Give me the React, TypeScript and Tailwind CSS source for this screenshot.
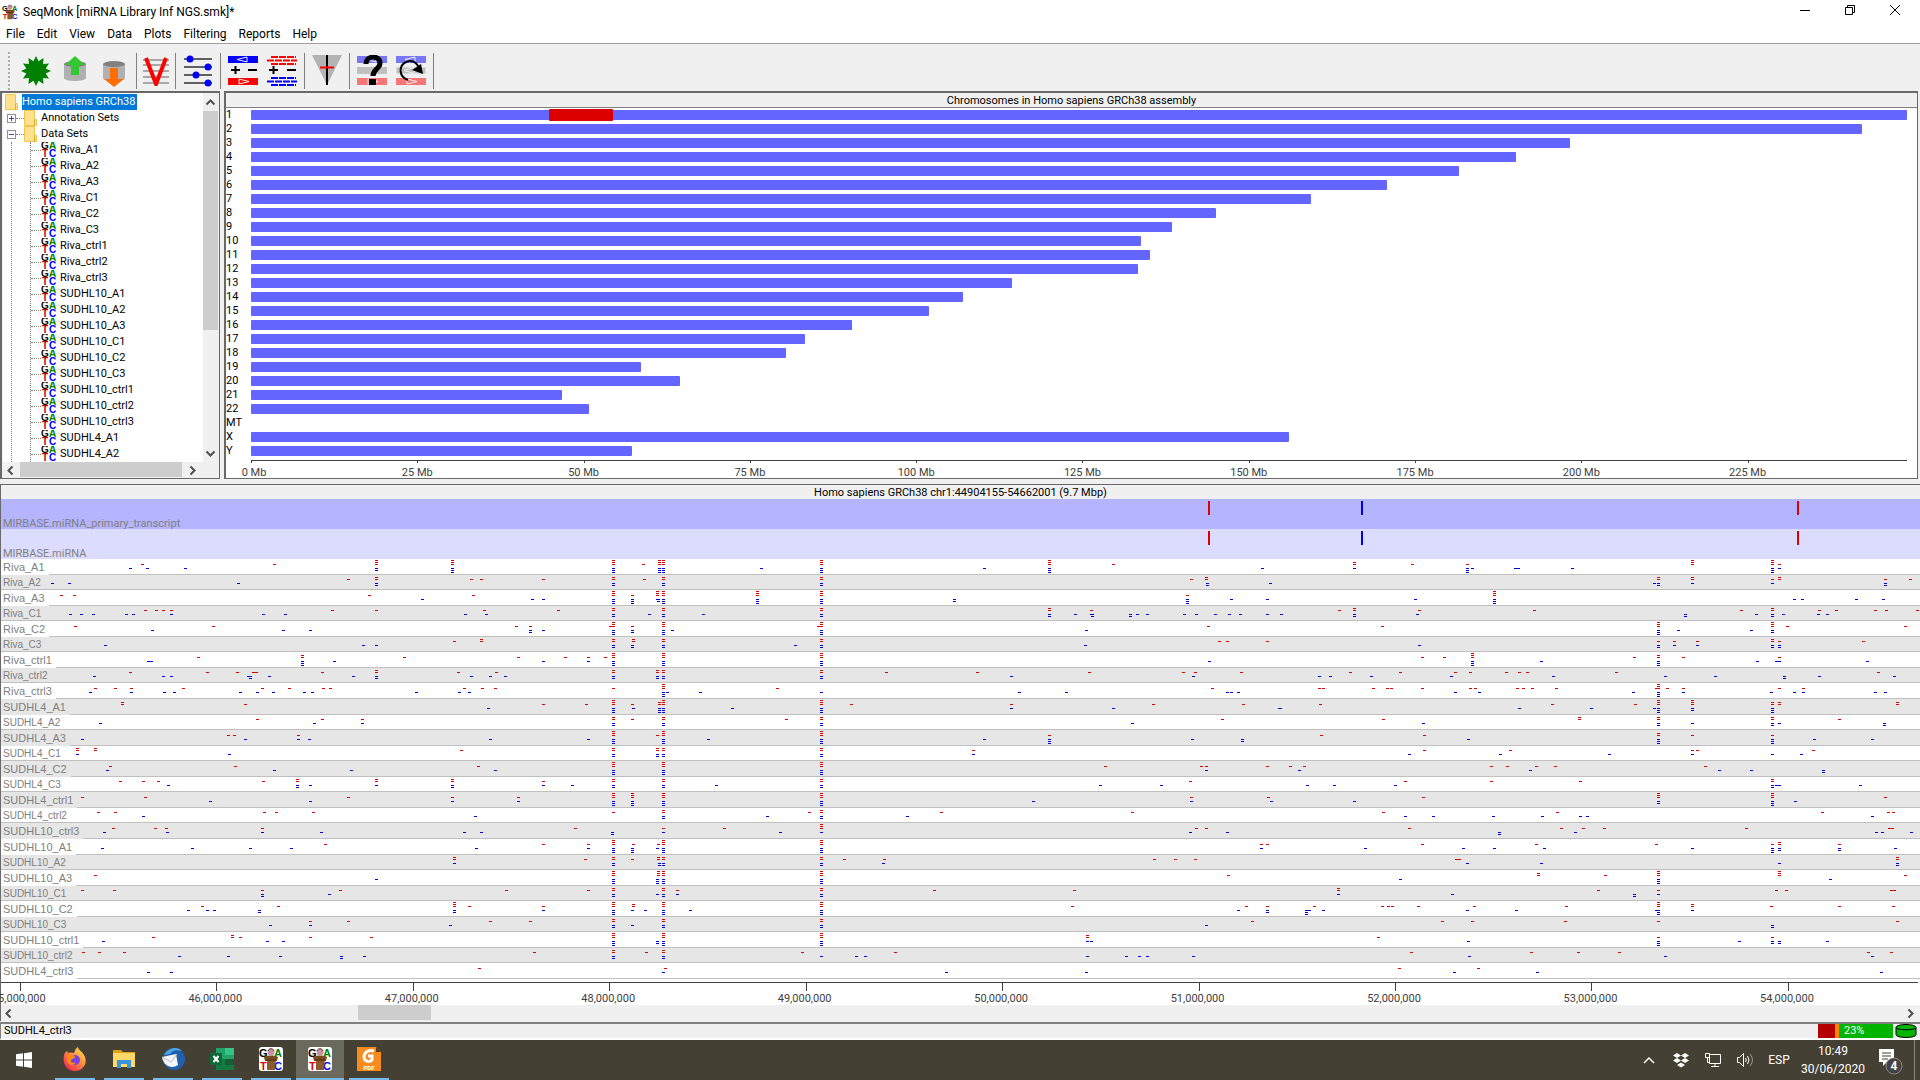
import { ReactNode } from "react";

interface Lane {
  name: string;
  fwd: string[];
  rev: string[];
  tall: boolean;
}

const START = 44904155;
const SPAN = 9757846;
const BLOCK = 1568;
const BINS = BLOCK * 3;

const chromosomes: [string, number][] = [
  ["1", 248.96], ["2", 242.19], ["3", 198.3], ["4", 190.21], ["5", 181.54],
  ["6", 170.81], ["7", 159.35], ["8", 145.14], ["9", 138.39], ["10", 133.8],
  ["11", 135.09], ["12", 133.28], ["13", 114.36], ["14", 107.04], ["15", 101.99],
  ["16", 90.34], ["17", 83.26], ["18", 80.37], ["19", 58.62], ["20", 64.44],
  ["21", 46.71], ["22", 50.82], ["MT", 0], ["X", 156.04], ["Y", 57.23],
];
const LONGEST = 248.96;

const treeItems = [
  "Riva_A1", "Riva_A2", "Riva_A3", "Riva_C1", "Riva_C2", "Riva_C3",
  "Riva_ctrl1", "Riva_ctrl2", "Riva_ctrl3",
  "SUDHL10_A1", "SUDHL10_A2", "SUDHL10_A3", "SUDHL10_C1", "SUDHL10_C2", "SUDHL10_C3",
  "SUDHL10_ctrl1", "SUDHL10_ctrl2", "SUDHL10_ctrl3", "SUDHL4_A1", "SUDHL4_A2",
];

// reads per lane in three blocks of bins, "922x3" is a stack of three reads
const lanes: Lane[] = [
  { name: "Riva_A1", tall: true,
    fwd: ["349 672 922x3 1108x3 1503x3", "8 47x3 57x3 444x3 1003x3 1160", "182x2 324 459 1010x3 1206x3 1223"],
    rev: ["319 361 454 922x2 1108x3 1503x3", "47x3 57x3 297 444x3 844 1003x3 1525", "182 459x3 471 576 584 716 1206x3 1223"] },
  { name: "Riva_A2", tall: false,
    fwd: ["853 922x2 1155 1179 1331 1503x2", "11 57x2 444x2 1351 1388x2", "927x2 1010x2 1206 1223x2 1483 1544"],
    rev: ["128 170 584 922x2 1503x2", "57x2 444x2 1390x2 1544", "917 927x2 1010 1206 1483x2"] },
  { name: "Riva_A3", tall: true,
    fwd: ["150 182 905 1160 1503x3 1549", "43x3 57x3 288x3 444x3 1341", "525x3"],
    rev: ["1035 1304 1331 1503x3 1549x3", "43 45x2 57x3 288x3 444x3 770x2 1341x3 1449 1537", "332 525x3 1260 1280 1412 1478"] },
  { name: "Riva_C1", tall: false,
    fwd: ["356 383 400 420 814 922 1187 1368 1503x2", "57x2 444x2 1003x2 1106", "145 182x2 341 623 1130 1206x2 1321 1363 1459 1486 1562"],
    rev: ["172 199 229 310 327 420 645 699 1140 1192 1503x2", "23 57x2 155 444x2 1003x2 1067 1106 1109x2 1201x2 1219 1243 1334 1363 1410 1444 1471 1537", "3 182x2 337 993x2 1167 1206x2 1233 1319 1341"] },
  { name: "Riva_C2", tall: true,
    fwd: ["185 523 1265 1299 1496 1503x3 1549", "57x3 438 444x3 1392", "251 927x3 1206x3 1243 1532"],
    rev: ["373 694 760 1299x2 1331 1503x3 1549x2", "57x3 79 444x3 1094", "927x3 976 1155 1206x2"] },
  { name: "Riva_C3", tall: false,
    fwd: ["1113 1179x2 1503x2 1551x2", "57x2 444x2 1419 1439 1537", "927 966 1023 1206x2 1223 1429"],
    rev: ["258 890 922 1503x2 1549x2", "57x2 381 444x2 1091", "341 927x2 966 1023 1206x2 1223x2"] },
  { name: "Riva_ctrl1", tall: true,
    fwd: ["487 741x2 991 1270 1385 1441 1483 1503x3", "57x3 444x3", "349 403 471x3 868 927x2 988 1223"],
    rev: ["364 371 741x3 819 1331 1441 1503x3", "57x3 444x3 1395", "471x3 640 927x3 1170 1217 1223 1439"] },
  { name: "Riva_ctrl2", tall: false,
    fwd: ["319 508 582 621 628 790 922x2 1123 1216 1503x2", "43x2 57x2 444x2 604 827 1101 1331 1361 1473", "172 295 430 466 555 586 606 824 1466"],
    rev: ["231 400 420 608 613x2 660 866 922x2 1155 1201 1238 1503x2", "43x2 57x2 444x2 910 1356", "96 123 224 420 670 944 1067 1236x2 1321 1505"] },
  { name: "Riva_ctrl3", tall: true,
    fwd: ["234 283 322 449 643 709 792 809 1138 1182 1214 1503", "57x3 337 1402", "96 106 229 263 273 349 466 479 582 596 618 677 922 927x3 949 988 1223 1282"],
    rev: ["221 322 403 427 589 631 670 746 765 1020 1125 1150", "57x3 67 148 444 929 1045 1439 1449 1466", "430 488 866 927x3 988 1204 1260 1282 1459 1483"] },
  { name: "SUDHL4_A1", tall: true,
    fwd: ["300x2 601 1331 1437 1503x3 1549", "47x2 57x3 444x3 518 910 1258 1478", "99 667 871 927x3 1010x3 1206x2 1223x2 1513x2"],
    rev: ["1196 1503x3 1551", "47x3 57x3 226 444x3 910 1160 1567", "1 586 763 917 927x3 1010x2 1206x3"] },
  { name: "SUDHL4_A2", tall: false,
    fwd: ["631 790 888 1503x2 1549", "57x2 359 444x2 1427", "253 733x2 927x2 1206x2 1370"],
    rev: ["246 770 888 1503x2", "57x2 444x2 1206", "351 927x2 1010 1206x2 1223 1481x2"] },
  { name: "SUDHL4_A3", tall: true,
    fwd: ["559 574 731 1503x3", "43 57x3 444x3 1003", "101 354 927x2 1010 1206"],
    rev: ["202 601 731 758 1201 1441 1503x3", "57x3 167 444x3 844 1003x3 1353 1476x2", "461 927x3 1206x3 1309 1451"] },
  { name: "SUDHL4_C1", tall: false,
    fwd: ["190x2 234x2 1130 1503x2", "43x2 57x2 444x2 817", "354 564 1010 1023 1307"],
    rev: ["190 562 1503x2", "43x2 57x2 444x2 817", "317 540 807 1010 1206 1277"] },
  { name: "SUDHL4_C2", tall: true,
    fwd: ["270 577 1172 1503x3", "57x3 444x3 1140 1375 1388 1537", "25 60 518 557 628 675 1042"],
    rev: ["263 672 861 1214 1503x3", "57x3 444x3 1388", "47 613 1076 1155 1331x2"] },
  { name: "SUDHL4_C3", tall: false,
    fwd: ["295 351 388 645 729x2 922x2 1108x2 1331 1503x2", "57x2 444x2 1348", "307 518 736 1206x2"],
    rev: ["412 729x2 760 922 1108x2 1331 1402 1503x2", "57x2 187 444x2 1128 1277", "67 133 283 1206x2 1217 1223 1422"] },
  { name: "SUDHL4_ctrl1", tall: true,
    fwd: ["202 356 853 1108 1270 1503x3 1549x3", "57x3 444x3 1351 1539", "351 927x3 1206x3 1483"],
    rev: ["515 760 1108 1270 1503x3 1549x3", "57x3 444x3 964 1351 1547", "182 927x2 1206x3 1263"] },
  { name: "SUDHL4_ctrl2", tall: false,
    fwd: ["241 283 648 677 768 1503", "57x2 415 444x2 738 1206", "253 680 1329 1490 1503"],
    rev: ["351 1165", "57x2 312 444x2 655", "307 376 523 643 736 753 1451"] },
  { name: "SUDHL10_ctrl3", tall: true,
    fwd: ["278 381 408 643 1410", "57 207 444x3 1363 1388", "317 689 743 795 1143 1494 1500"],
    rev: ["256 410 643 787 1138 1179 1500x2", "57 344 444 1348 1439", "537x2 724 1461 1476 1547"] },
  { name: "SUDHL10_A1", tall: true,
    fwd: ["797 1331 1441 1503x3 1551", "45 57x3 444x3 1522 1537", "349 628 922 1206 1223x2 1370"],
    rev: ["251 471 613 714 1167 1441 1503x3 1549x3", "43 57x3 444x3 1522", "209 449 525 648 1010 1206x3 1223x2 1370x2 1508"] },
  { name: "SUDHL10_A2", tall: false,
    fwd: ["1113x2 1434 1503x2 1549", "45x2 57x2 444x2 501 599 1260 1312 1361", "432 439 1513x2"],
    rev: ["1113 1503x2", "47x2 57x2 444x2 596", "459 640 1223 1513x2"] },
  { name: "SUDHL10_A3", tall: true,
    fwd: ["234 1503x3", "45x3 57x3 444x3 1441", "633x2 797 927x3 1223x3 1532"],
    rev: ["922 1503x3", "43x3 57x3 444x3", "295 927x3 1348"] },
  { name: "SUDHL10_C1", tall: false,
    fwd: ["202 280 643 834 1241 1441 1503x2", "57x2 92 444x2 721 1064", "143x2 780 927 1216 1241 1498 1505"],
    rev: ["643x2 807 1503x2", "43 57x2 92 444x2", "143 422 868x2 927"] },
  { name: "SUDHL10_C2", tall: true,
    fwd: ["496 682 1113x3 1150 1331 1503x3 1551x2", "57x3 444x3 1059 1486 1537", "84 251 265 275 339 476 702 927x3 1010x2 1204 1370 1503"],
    rev: ["461 508 525 635x2 1113x2 1331 1503x3 1549", "13 57x3 123 444x3 1466 1537x2", "65x3 72 106 459 579 922 927x3 1010"] },
  { name: "SUDHL10_C3", tall: false,
    fwd: ["760 853 1201 1299 1503x2", "57x2 444x2 1500", "398 471 699 927 1513"],
    rev: ["662 760 1103 1503x2 1549", "57x2 444x2 1388", "1206x2"] },
  { name: "SUDHL10_ctrl1", tall: true,
    fwd: ["376 569x2 589 760 910 1503x3", "57x3 444x3 1096x2", "241 927 1206"],
    rev: ["253 655 694 1503x3", "43x2 57x3 444x3 1096 1106", "461 927x3 1125 1206x2 1223x2 1341"] },
  { name: "SUDHL10_ctrl2", tall: false,
    fwd: ["204 243 305 1309 1503x2", "16 57x2 398 626", "322 616 731 831 1441 1498"],
    rev: ["439 559 687 836x2 893 1503x2", "57x2 444 530 552 1096 1192 1223 1243 1356", "464 944 1451"] },
  { name: "SUDHL4_ctrl3", tall: true,
    fwd: ["1174", "62", "292 486"],
    rev: ["363 420", "57 751 1094", "427 631 1473"] },
];

const parseReads = (blocks: string[]) =>
  blocks.flatMap((block, i) =>
    block.split(" ").map((token) => {
      const [bin, count] = token.split("x");
      const px = Math.floor(((Number(bin) + i * BLOCK) / BINS) * 1920) - 2;
      return { left: `${(px / 1919) * 100}%`, count: Number(count ?? 1) };
    })
  );

const Reads = ({ lane }: { lane: Lane }) => {
  const mid = lane.tall ? 5 : 4;
  return (
    <svg className="absolute inset-0 w-full h-full" shapeRendering="crispEdges">
      {parseReads(lane.fwd).map((read, i) =>
        Array.from({ length: read.count }, (_, n) => (
          <rect key={`${i}-${n}`} x={read.left} y={mid - n * 2} width="3" height="1" fill="#dc0000" />
        ))
      )}
      {parseReads(lane.rev).map((read, i) =>
        Array.from({ length: read.count }, (_, n) => (
          <rect key={`${i}-${n}`} x={read.left} y={mid + 4 + n * 2} width="3" height="1" fill="#0000dc" />
        ))
      )}
    </svg>
  );
};

const LaneRow = ({ lane, index }: { lane: Lane; index: number }) => {
  const bg = index % 2 ? "bg-[#e6e6e6]" : "bg-white";
  return (
    <li
      className={`relative flex border-b border-[#c0c0c0] font-['Liberation_Sans',sans-serif] text-[#808080] ${bg} ${
        lane.tall ? "h-[16px] text-[11px] leading-[16px]" : "h-[15px] text-[10px] leading-[15px]"
      }`}
    >
      <span className={`px-[2px] ${lane.tall ? `h-[16px] pr-1 ${bg}` : "h-[14px]"}`}>{lane.name}</span>
      <Reads lane={lane} />
    </li>
  );
};

const FeatureTrack = ({ name, className }: { name: string; className: string }) => (
  <li className={`relative h-[30px] flex items-end pl-[2px] text-[#808080] leading-[11px] ${className}`}>
    {name}
    <svg className="absolute inset-0 w-full h-full" shapeRendering="crispEdges">
      <rect x={`${(1207 / 1919) * 100}%`} y="2" width="2" height="14" fill="#dc0000" />
      <rect x={`${(1360 / 1919) * 100}%`} y="2" width="2" height="14" fill="#0000dc" />
      <rect x={`${(1796 / 1919) * 100}%`} y="2" width="2" height="14" fill="#dc0000" />
    </svg>
  </li>
);

const Arrow = ({ d }: { d: string }) => (
  <svg width="15" height="15" viewBox="0 0 15 15" fill="none" stroke="#505050" strokeWidth="2">
    <path d={d} />
  </svg>
);
const LEFT = "M9.500 3.500 5.500 7.500 9.500 11.500";
const RIGHT = "M5.500 3.500 9.500 7.500 5.500 11.500";
const UP = "M3.500 9.500 7.500 5.500 11.500 9.500";
const DOWN = "M3.500 5.500 7.500 9.500 11.500 5.500";

const Gatc = () => (
  <svg width="16" height="16" viewBox="0 0 16 16" className="shrink-0" fontFamily="Liberation Sans, sans-serif" fontWeight="700" fontSize="10">
    <text x="0" y="7" fill="#111">G</text>
    <text x="8" y="7" fill="#008000">A</text>
    <text x="1" y="15" fill="#d00000">T</text>
    <text x="8" y="15" fill="#0000ff">C</text>
  </svg>
);

const Monk = ({ size, boxed }: { size: number; boxed?: boolean }) => (
  <svg width={size} height={size} viewBox="0 0 24 24" className="shrink-0" fontFamily="Liberation Sans, sans-serif" fontWeight="700" fontSize="11">
    {boxed && <rect width="24" height="24" rx="3" fill="#fff" />}
    <text x="0" y="10" fill="#000">G</text>
    <text x="15" y="10" fill="#008000">A</text>
    <text x="1" y="23" fill="#e00000">T</text>
    <text x="15" y="23" fill="#0000ff">C</text>
    <path d="M8 12h9l-1 11H8z" fill="#8b5a2b" />
    <path d="M5 10c3-2 11-2 14 0l-1 4H6z" fill="#7a4a1e" />
    <circle cx="12" cy="5" r="3.500" fill="#c9929e" />
    <path d="M9 4c1-3 5-3 6 0" fill="none" stroke="#5b3a3a" />
    <path d="M7 13h10" stroke="#4a2a0a" />
  </svg>
);

const Folder = () => (
  <svg width="13" height="16" viewBox="0 0 13 16" className="shrink-0">
    <path d="M.5.5h10v9h2v6H.5z" fill="#ffe08c" stroke="#edc64f" />
    <path d="M10.500 9.500v6" stroke="#d9ac32" />
  </svg>
);

const Expander = ({ open }: { open?: boolean }) => (
  <svg width="9" height="9" viewBox="0 0 9 9" className="shrink-0" shapeRendering="crispEdges">
    <rect x=".5" y=".5" width="8" height="8" fill="#fff" stroke="#919191" />
    <path d={open ? "M2 4.500h5" : "M2 4.500h5M4.500 2v5"} stroke="#3050a0" />
  </svg>
);

const Tree = () => (
  <section className="w-[220px] shrink-0 flex flex-col border-t-2 border-l-2 border-[#696969] border-b border-r bg-[#f0f0f0] pl-px">
    <div className="flex">
      <ul className="flex-1 bg-white text-black leading-[16px] pl-[2px] pt-px">
        <li className="flex h-4 gap-1">
          <Folder />
          <span className="bg-[#0078d7] text-white pr-[2px]">Homo sapiens GRCh38</span>
        </li>
        <li className="flex h-4 items-center pl-[2px]">
          <Expander />
          <span className="w-2 border-t border-dotted border-[#808080]" />
          <Folder />
          <span className="pl-1">Annotation Sets</span>
        </li>
        <li className="flex h-4 items-center pl-[2px]">
          <Expander open />
          <span className="w-2 border-t border-dotted border-[#808080]" />
          <Folder />
          <span className="pl-1">Data Sets</span>
        </li>
        <li className="ml-[6px] border-l border-dotted border-[#808080] pl-[18px]">
          <ul className="border-l border-dotted border-[#808080]">
            {treeItems.map((item) => (
              <li key={item} className="flex h-4 items-center">
                <span className="w-[10px] border-t border-dotted border-[#808080]" />
                <Gatc />
                <span className="pl-[3px]">{item}</span>
              </li>
            ))}
          </ul>
        </li>
      </ul>
      <div className="w-[16px] flex flex-col">
        <button aria-label="Scroll up" className="h-[18px] flex items-center"><Arrow d={UP} /></button>
        <div className="h-[219px] bg-[#cdcdcd] mr-px" />
        <button aria-label="Scroll down" className="h-[17px] mt-auto flex items-center"><Arrow d={DOWN} /></button>
      </div>
    </div>
    <div className="h-[16px] flex">
      <button aria-label="Scroll left" className="w-[17px]"><Arrow d={LEFT} /></button>
      <div className="w-[162px] h-[15px] bg-[#cdcdcd]" />
      <button aria-label="Scroll right" className="w-[17px] pl-[3px]"><Arrow d={RIGHT} /></button>
    </div>
  </section>
);

const Chromosomes = () => (
  <section className="flex-1 flex flex-col bg-white border-t-2 border-l-2 border-[#696969] border-b border-r">
    <h2 className="h-[15px] leading-[16px] bg-[#f0f0f0] border-b border-[#808080] text-center">
      Chromosomes in Homo sapiens GRCh38 assembly
    </h2>
    <ul>
      {chromosomes.map(([name, length]) => (
        <li key={name} className="h-[14px] flex items-center">
          <span className="w-[25px] leading-[14px]">{name}</span>
          <div className="flex-1 mr-[10px]">
            <div
              className="h-[10px] flex items-center rounded-[1px] bg-[#6464ff]"
              style={{ width: `${(length / LONGEST) * 100}%` }}
            >
              {name === "1" && (
                <div className="h-[12px] shrink-0 rounded-[1px] bg-[#dc0000] w-[3.87%] ml-[18%]" />
              )}
            </div>
          </div>
        </li>
      ))}
    </ul>
    <svg className="h-[19px] w-full pl-[25px] pr-[10px] overflow-visible mt-px" fill="#404040" shapeRendering="crispEdges">
      <rect width="100%" y="1" height="1" />
      {[0, 25, 50, 75, 100, 125, 150, 175, 200, 225].map((mb) => (
        <g key={mb}>
          <rect x={`${(mb / LONGEST) * 100}%`} y="2" width="1" height="2" />
          <text x={`${(mb / LONGEST) * 100}%`} dx={mb ? 0 : 3} y="17" textAnchor="middle">
            {mb} Mb
          </text>
        </g>
      ))}
    </svg>
  </section>
);

const ToolButton = ({ label, narrow, children }: { label: string; narrow?: boolean; children: ReactNode }) => (
  <button aria-label={label} title={label} className={`h-[40px] flex items-center justify-center ${narrow ? "w-[33px]" : "w-[39px]"}`}>
    {children}
  </button>
);
const Sep = () => <span className="w-px h-[36px] ml-[3px] mr-[2px] bg-[#808080]" />;

const star = Array.from({ length: 24 }, (_, i) => {
  const r = i % 2 ? 10 : 15;
  const a = (i * Math.PI) / 12;
  return `${15 + r * Math.sin(a)},${15 - r * Math.cos(a)}`;
}).join(" ");

const Drum = ({ children }: { children: ReactNode }) => (
  <svg width="22" height="32" viewBox="0 0 22 32">
    <path d="M0 9v14c0 4 22 4 22 0V9z" fill="#b0b0b0" />
    <ellipse cx="11" cy="9" rx="11" ry="3" fill="#808080" />
    {children}
  </svg>
);

const Blocks = ({ faded }: { faded?: boolean }) => (
  <g opacity={faded ? 0.5 : 1}>
    <path d="M0 1h30v7H0z" fill="#0000ff" />
    <path d="M9 4.500 19 2v5z" fill="#0000ff" stroke="#f0f0f0" />
    <path d="M0 23h30v7H0z" fill="#ff0000" />
    <path d="M21 26.500 11 24v5z" fill="#ff0000" stroke="#f0f0f0" />
  </g>
);

const ToolBar = () => (
  <div className="h-[48px] flex items-center bg-[#f0f0f0] border-t border-[#a0a0a0] pl-2 pt-[6px]">
    <span className="w-px h-[38px] mr-[6px] border-l-2 border-dotted border-[#b0b0b0]" />
    <ToolButton label="New project">
      <svg width="30" height="30"><polygon points={star} fill="#008000" /></svg>
    </ToolButton>
    <ToolButton label="Open project">
      <Drum><path d="M11 1 21 10h-6v10H7V10H1z" fill="#32c832" /></Drum>
    </ToolButton>
    <ToolButton label="Save project">
      <Drum><path d="M7 13h8v11h6l-10 8-10-8h6z" fill="#ff6e00" /></Drum>
    </ToolButton>
    <Sep />
    <ToolButton label="Quantitation" narrow>
      <svg width="26" height="30">
        <path d="M0 4h26M0 9h26M0 15h26M0 21h26M0 27h26" stroke="#a8a8a8" strokeWidth="2" />
        <path d="M3 2 13 28 23 2" fill="none" stroke="#ff0000" strokeWidth="4" />
      </svg>
    </ToolButton>
    <Sep />
    <ToolButton label="Change scale">
      <svg width="28" height="32">
        <path d="M0 4h28M0 12h28M0 20h28M0 28h28" stroke="#606060" strokeWidth="2" />
        <g fill="#0000ff">
          <circle cx="6" cy="4" r="3.500" /><circle cx="24" cy="12" r="3.500" />
          <circle cx="12" cy="20" r="3.500" /><circle cx="24" cy="28" r="3.500" />
        </g>
      </svg>
    </ToolButton>
    <Sep />
    <ToolButton label="Annotation tracks">
      <svg width="30" height="31">
        <Blocks />
        <path d="M3 15h9M7.500 11v8M20 15h9" stroke="#000" strokeWidth="2" />
      </svg>
    </ToolButton>
    <ToolButton label="Data tracks">
      <svg width="30" height="31">
        <path d="M4 2h25M0 5.500h30M4 9h25" stroke="#ff0000" strokeWidth="2" strokeDasharray="7 1" />
        <path d="M4 23h25M0 26.500h30M4 30h25" stroke="#0000ff" strokeWidth="2" strokeDasharray="7 1" />
        <path d="M2 15h9M6.500 11v8M20 15h9" stroke="#000" strokeWidth="2" />
      </svg>
    </ToolButton>
    <Sep />
    <ToolButton label="Goto position">
      <svg width="30" height="31">
        <path d="M0 0h30L15 30z" fill="#b4b4b4" />
        <path d="M15 0v30" stroke="#000" strokeWidth="2" />
        <path d="M8 12.500h14" stroke="#ff0000" strokeWidth="2" />
      </svg>
    </ToolButton>
    <Sep />
    <ToolButton label="Find feature">
      <svg width="30" height="31">
        <Blocks faded />
        <path d="M0 12h30v7H0z" fill="#c0c0c0" />
        <path d="M9 9c0-9 14-9 14-1 0 6-7 6-7 13" fill="none" stroke="#000" strokeWidth="5" />
        <path d="M12 24h7v6h-7z" />
      </svg>
    </ToolButton>
    <ToolButton label="Reload features">
      <svg width="30" height="31">
        <Blocks faded />
        <path d="M0 12h30v7H0zM8 15.500l10-3v6z" fill="#c0c0c0" stroke="#f0f0f0" />
        <path d="M12 25C3 22 2 11 10 7c6-3 12 1 13 7" fill="none" stroke="#000" strokeWidth="2" />
        <path d="M16 15 25 9l2 10z" />
      </svg>
    </ToolButton>
    <Sep />
  </div>
);

const apps: { name: string; icon: ReactNode; active?: boolean }[] = [
  {
    name: "Firefox",
    icon: (
      <svg width="24" height="24" viewBox="0 0 24 24">
        <defs>
          <linearGradient id="fox" x1="1" y1="0" x2="0.200" y2="1">
            <stop offset="0" stopColor="#fff44f" /><stop offset=".45" stopColor="#ff9640" /><stop offset="1" stopColor="#f0264f" />
          </linearGradient>
        </defs>
        <path d="M15 0c0 3 4 4 6 8 5 9-2 16-9 16S-1 18 1 9c0-2 1-4 3-5l1 2c3-1 4 0 6 0 1-3 2-5 4-6z" fill="url(#fox)" />
        <circle cx="12" cy="13" r="5" fill="#7542e5" />
        <path d="M4 8c4-1 8 0 8 2s-3 1-4 3 2 4 5 2c-2 5-10 3-9-3z" fill="#ff8a16" />
      </svg>
    ),
  },
  {
    name: "File Explorer",
    icon: (
      <svg width="22" height="20" viewBox="0 0 22 20">
        <path d="M0 1h8l2 2h12v15H0z" fill="#e0a010" />
        <path d="M0 4h22v14H0z" fill="#ffd868" />
        <path d="M4 11h14v8h-4v-4H8v4H4z" fill="#3a94dc" />
      </svg>
    ),
  },
  {
    name: "Thunderbird",
    icon: (
      <svg width="24" height="24" viewBox="0 0 24 24">
        <circle cx="13" cy="12" r="11" fill="#1f5fae" />
        <path d="M3 8C7 0 17-1 21 4c-6-2-10 0-12 3z" fill="#4ba3e8" />
        <path d="M1 10l14-3 2 11C11 22 3 20 1 10z" fill="#f4f6f8" />
        <path d="M1 10l9 5 6-8" fill="none" stroke="#b0bccb" />
      </svg>
    ),
  },
  {
    name: "Excel",
    icon: (
      <svg width="24" height="22" viewBox="0 0 24 22">
        <path d="M6 0h18v22H6z" fill="#21a366" />
        <path d="M15 0h9v7h-9z" fill="#33c481" /><path d="M6 11h18v11H6z" fill="#107c41" /><path d="M15 11h9v6h-9z" fill="#185c37" />
        <rect y="5" width="12" height="12" fill="#0e6b38" />
        <path d="M3.500 8l5 6M8.500 8l-5 6" stroke="#fff" strokeWidth="2" />
      </svg>
    ),
  },
  { name: "SeqMonk", icon: <Monk size={24} boxed /> },
  { name: "SeqMonk project", icon: <Monk size={24} boxed />, active: true },
  {
    name: "Foxit PDF",
    icon: (
      <svg width="24" height="24" viewBox="0 0 24 24">
        <path d="M0 0h19l5 5v19H0z" fill="#f68b1f" />
        <path d="M19 0v5h5z" fill="#5a3a18" />
        <path d="M17 4c-6-2-10 2-10 6s5 6 8 3v-4h-4" fill="none" stroke="#fff" strokeWidth="3" />
        <text x="12" y="23" fontSize="6" fontWeight="700" fill="#fff" textAnchor="middle">PDF</text>
      </svg>
    ),
  },
];

const TaskBar = () => (
  <footer className="h-[40px] flex bg-[#454034] text-white text-[12px]">
    <button aria-label="Start" className="w-[48px] mr-[3px] flex items-center justify-center">
      <svg width="16" height="16" viewBox="0 0 16 16" fill="#fff">
        <path d="M0 2.300 7 1.300V7.600H0zM8 1.200 16 0v7.600H8zM0 8.400h7v6.300l-7-1zM8 8.400h8V16l-8-1.200z" />
      </svg>
    </button>
    <nav className="flex gap-px">
      {apps.map((app) => (
        <button
          key={app.name}
          aria-label={app.name}
          className={`w-[48px] flex flex-col items-center ${app.active ? "bg-[#6b685e]" : ""}`}
        >
          <span className="flex-1 flex items-center">{app.icon}</span>
          <span className={`h-[2px] bg-[#76b9ed] ${app.active ? "w-full" : "w-[40px]"}`} />
        </button>
      ))}
    </nav>
    <div className="ml-auto flex items-center">
      <button aria-label="Show hidden icons" className="w-8 flex justify-center">
        <svg width="12" height="8" fill="none" stroke="#fff" strokeWidth="1.500"><path d="M1 7l5-5 5 5" /></svg>
      </button>
      <button aria-label="Dropbox" className="w-8 flex justify-center">
        <svg width="16" height="15" viewBox="0 0 16 15" fill="#fff">
          <path d="M4 0l4 2.500L4 5 0 2.500zM12 0l4 2.500L12 5 8 2.500zM4 5l4 2.500L4 10 0 7.500zM12 5l4 2.500-4 2.500-4-2.500zM8 9.500l4 2.500-4 2.500L4 12z" />
        </svg>
      </button>
      <button aria-label="Network" className="w-8 flex justify-center">
        <svg width="16" height="14" fill="none" stroke="#fff">
          <path d="M4.500 1.500h11v9h-11zM10 10.500v3M6 13.500h8" /><path d="M.5.5h4v4h-4zM2.500 4.500v5h2" />
        </svg>
      </button>
      <button aria-label="Volume" className="w-8 flex justify-center">
        <svg width="17" height="14" fill="none" stroke="#fff">
          <path d="M.5 4.500h2l4-4v13l-4-4h-2zM8.500 5q1.500 2 0 4M10.500 3q3 4 0 8" /><path d="M13 1q5 6 0 12" stroke="#99968f" />
        </svg>
      </button>
      <button className="w-9 text-center">ESP</button>
      <time className="w-[72px] text-center leading-[18px]">
        10:49
        <br />
        30/06/2020
      </time>
      <button aria-label="Notifications" className="w-[46px] h-full border-r border-[#8a877f] mr-[5px]">
        <svg width="30" height="30" viewBox="0 0 30 30" className="ml-[9px]">
          <path d="M1 4h15v13h-7l-4 4v-4H1z" fill="#fff" />
          <path d="M4 8h9M4 11h9M4 14h6" stroke="#454034" />
          <circle cx="16" cy="21" r="8" fill="#444" stroke="#8a877f" />
          <text x="16" y="25" fontSize="12" fontWeight="700" fill="#fff" textAnchor="middle">4</text>
        </svg>
      </button>
    </div>
  </footer>
);

const App = () => (
  <main className="min-h-screen flex flex-col bg-[#f0f0f0] text-black text-[11px] font-[Roboto,sans-serif]">
    <header className="bg-white text-[12px]">
      <div className="h-[23px] flex items-center pl-[2px]">
        <Monk size={16} />
        <h1 className="pl-[5px]">SeqMonk [miRNA Library Inf NGS.smk]*</h1>
        <div className="ml-auto flex pr-[3px] pb-[3px]">
          <button aria-label="Minimize" className="w-[45px] flex justify-center">
            <svg width="10" height="10" stroke="#000"><path d="M0 5.500h10" /></svg>
          </button>
          <button aria-label="Restore" className="w-[45px] flex justify-center">
            <svg width="10" height="10" fill="none" stroke="#000"><path d="M.5 2.500h7v7h-7zM2.500 2.500v-2h7v7h-2" /></svg>
          </button>
          <button aria-label="Close" className="w-[45px] flex justify-center">
            <svg width="10" height="10" stroke="#000"><path d="M0 0l10 10M10 0 0 10" /></svg>
          </button>
        </div>
      </div>
      <nav className="h-[20px] flex items-center gap-3 pl-[6px] pt-[2px]">
        {["File", "Edit", "View", "Data", "Plots", "Filtering", "Reports", "Help"].map((item) => (
          <button key={item}>{item}</button>
        ))}
      </nav>
    </header>
    <ToolBar />
    <div className="flex gap-1 pr-[2px]">
      <Tree />
      <Chromosomes />
    </div>
    <section className="mt-[5px] border-t border-l border-[#696969]">
      <h2 className="h-[14px] leading-[16px] text-center">Homo sapiens GRCh38 chr1:44904155-54662001 (9.7 Mbp)</h2>
      <ul>
        <FeatureTrack name="MIRBASE.miRNA_primary_transcript" className="bg-[#b4b4ff]" />
        <FeatureTrack name="MIRBASE.miRNA" className="bg-[#dcdcff]" />
        {lanes.map((lane, i) => (
          <LaneRow key={lane.name} lane={lane} index={i} />
        ))}
      </ul>
      <div className="bg-white pt-[3px]">
        <svg className="w-full h-[23px] pr-[2px] overflow-visible" fill="#404040" shapeRendering="crispEdges">
          <rect width="100%" height="1" />
          {Array.from({ length: 10 }, (_, i) => (45 + i) * 1000000).map((pos) => {
            const x = `${((pos - START) / SPAN) * 100}%`;
            return (
              <g key={pos}>
                <rect x={x} y="1" width="1" height="8" />
                <text x={x} dx="-1" y="20" textAnchor="middle">{pos.toLocaleString("en-US")}</text>
              </g>
            );
          })}
        </svg>
      </div>
      <div className="h-[16px] flex items-center justify-between bg-[#f0f0f0]">
        <button aria-label="Scroll left"><Arrow d={LEFT} /></button>
        <div className="flex-1 h-full">
          <div className="h-[15px] w-[73px] bg-[#cdcdcd] ml-[18.1%]" />
        </div>
        <button aria-label="Scroll right" className="pr-[2px]"><Arrow d={RIGHT} /></button>
      </div>
    </section>
    <div className="h-[18px] mt-px flex border-t-2 border-l border-[#808080] bg-[#f0f0f0] border-b-2 border-b-white pl-[3px] pr-[3px] leading-[14px]">
      <span>SUDHL4_ctrl3</span>
      <div className="ml-auto flex text-white">
        <span className="w-[17px] bg-[#b40000]" />
        <span className="w-[4px] bg-[#ff8200]" />
        <span className="w-[54px] bg-[#00b400] pl-[5px]">23%</span>
      </div>
      <svg width="22" height="14" viewBox="0 0 22 14" className="ml-[2px]" fill="#00b400" stroke="#000">
        <path d="M1 3.500v7c0 4 20 4 20 0v-7c0-4-20-4-20 0c0 3 20 3 20 0" />
      </svg>
    </div>
    <TaskBar />
  </main>
);

export default App;
